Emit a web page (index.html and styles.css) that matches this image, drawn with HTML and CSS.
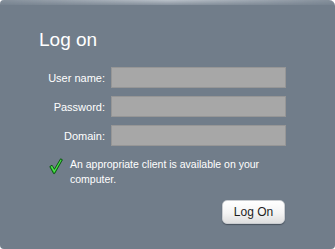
FILE: index.html
```html
<!DOCTYPE html>
<html>
<head>
<meta charset="utf-8">
<link rel="stylesheet" href="styles.css">
</head>
<body>
<div class="panel">
  <div class="glow"></div>
  <h1 class="title">Log on</h1>
  <div class="form">
    <label class="row"><span class="lbl">User name:</span><span class="field"></span></label>
    <label class="row"><span class="lbl">Password:</span><span class="field"></span></label>
    <label class="row"><span class="lbl">Domain:</span><span class="field"></span></label>
  </div>
  <div class="status">
    <svg class="check" width="14" height="17" viewBox="0 0 14 17">
      <path d="M0.8 8.6 L3 7.2 L5.4 11.2 L11.6 0.8 L13.4 1.8 L5.6 15.6 L4.6 15.6 Z" fill="#22c322" stroke="#0b4d12" stroke-width="0.9" stroke-linejoin="round"/>
      <path d="M2 8.7 L3 8.1 L5.4 12.4 L11.8 1.8 L12.4 2.1 L5.3 14.2 Z" fill="#8cf58c" opacity="0.55"/>
    </svg>
    <p class="msg">An appropriate client is available on your computer.</p>
  </div>
  <div class="actions">
    <button class="btn">Log On</button>
  </div>
</div>
</body>
</html>
```
FILE: styles.css
```css
html, body {
  margin: 0;
  padding: 0;
  background: #ffffff;
}
body {
  width: 335px;
  height: 249px;
  overflow: hidden;
  font-family: "Liberation Sans", Arial, sans-serif;
}
.panel {
  position: relative;
  width: 335px;
  height: 249px;
  box-sizing: border-box;
  background: #717d8a;
  border-radius: 4px 6px 4px 4px;
  padding: 28px 0 0 39px;
}
.glow {
  position: absolute;
  left: 0;
  right: 0;
  top: 0;
  height: 5px;
  border-radius: 4px 6px 0 0;
  background: linear-gradient(to right, rgba(180,188,196,0.3), rgba(190,197,205,0.95) 50%, rgba(180,188,196,0.3));
  -webkit-mask-image: linear-gradient(to bottom, #000, rgba(0,0,0,0.3));
}
.title {
  margin: 0;
  font-size: 19px;
  font-weight: normal;
  color: #ffffff;
  line-height: 24px;
}
.form {
  margin-top: 15px;
  display: flex;
  flex-direction: column;
  gap: 8px;
}
.row {
  display: flex;
  align-items: center;
  gap: 6px;
}
.lbl {
  width: 66px;
  text-align: right;
  color: #ffffff;
  font-size: 11px;
}
.field {
  width: 175px;
  height: 21px;
  box-sizing: border-box;
  background: #a7a7a7;
  border: 1px solid #969696;
}
.status {
  display: flex;
  align-items: flex-start;
  gap: 7px;
  margin: 11px 0 0 10px;
}
.check {
  margin-top: 1px;
  flex: none;
}
.msg {
  margin: 0;
  width: 215px;
  color: #ffffff;
  font-size: 10.5px;
  line-height: 15px;
}
.actions {
  display: flex;
  justify-content: flex-end;
  width: 246px;
  margin-top: 13px;
}
.btn {
  width: 63px;
  height: 24px;
  padding: 0;
  border: 1px solid #c9ccd0;
  border-radius: 5px;
  background: linear-gradient(to bottom, #ffffff, #f4f4f4 55%, #dedede);
  box-shadow: 0 1px 1px rgba(40,48,56,0.55);
  color: #1e1e1e;
  font-family: "Liberation Sans", Arial, sans-serif;
  font-size: 12px;
}
```
